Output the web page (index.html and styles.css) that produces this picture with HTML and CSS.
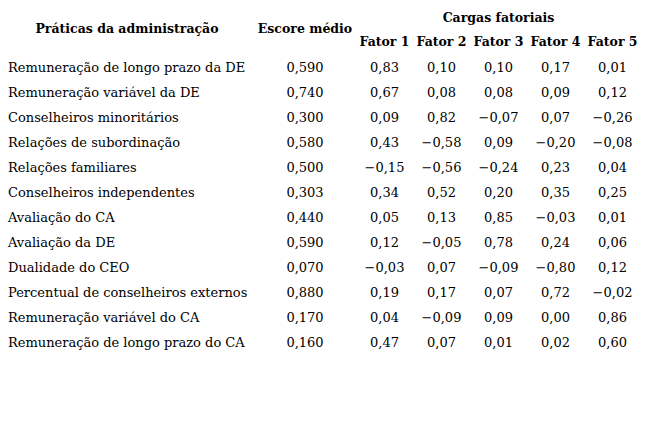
FILE: index.html
```html
<!DOCTYPE html>
<html lang="pt">
<head>
<meta charset="utf-8">
<title>Cargas fatoriais</title>
<link rel="stylesheet" href="styles.css">
</head>
<body>
<table class="tbl">
  <colgroup>
    <col class="c-label">
    <col class="c-score">
    <col class="c-f"><col class="c-f"><col class="c-f"><col class="c-f"><col class="c-f">
  </colgroup>
  <thead>
    <tr class="h1">
      <th rowspan="2" class="th-main">Práticas da administração</th>
      <th rowspan="2" class="th-main">Escore médio</th>
      <th colspan="5" class="th-group">Cargas fatoriais</th>
    </tr>
    <tr class="h2">
      <th>Fator 1</th><th>Fator 2</th><th>Fator 3</th><th>Fator 4</th><th>Fator 5</th>
    </tr>
  </thead>
  <tbody>
    <tr><td>Remuneração de longo prazo da DE</td><td>0,590</td><td>0,83</td><td>0,10</td><td>0,10</td><td>0,17</td><td>0,01</td></tr>
    <tr><td>Remuneração variável da DE</td><td>0,740</td><td>0,67</td><td>0,08</td><td>0,08</td><td>0,09</td><td>0,12</td></tr>
    <tr><td>Conselheiros minoritários</td><td>0,300</td><td>0,09</td><td>0,82</td><td>−0,07</td><td>0,07</td><td>−0,26</td></tr>
    <tr><td>Relações de subordinação</td><td>0,580</td><td>0,43</td><td>−0,58</td><td>0,09</td><td>−0,20</td><td>−0,08</td></tr>
    <tr><td>Relações familiares</td><td>0,500</td><td>−0,15</td><td>−0,56</td><td>−0,24</td><td>0,23</td><td>0,04</td></tr>
    <tr><td>Conselheiros independentes</td><td>0,303</td><td>0,34</td><td>0,52</td><td>0,20</td><td>0,35</td><td>0,25</td></tr>
    <tr><td>Avaliação do CA</td><td>0,440</td><td>0,05</td><td>0,13</td><td>0,85</td><td>−0,03</td><td>0,01</td></tr>
    <tr><td>Avaliação da DE</td><td>0,590</td><td>0,12</td><td>−0,05</td><td>0,78</td><td>0,24</td><td>0,06</td></tr>
    <tr><td>Dualidade do CEO</td><td>0,070</td><td>−0,03</td><td>0,07</td><td>−0,09</td><td>−0,80</td><td>0,12</td></tr>
    <tr><td>Percentual de conselheiros externos</td><td>0,880</td><td>0,19</td><td>0,17</td><td>0,07</td><td>0,72</td><td>−0,02</td></tr>
    <tr><td>Remuneração variável do CA</td><td>0,170</td><td>0,04</td><td>−0,09</td><td>0,09</td><td>0,00</td><td>0,86</td></tr>
    <tr><td>Remuneração de longo prazo do CA</td><td>0,160</td><td>0,47</td><td>0,07</td><td>0,01</td><td>0,02</td><td>0,60</td></tr>
  </tbody>
</table>
</body>
</html>
```
FILE: styles.css
```css
html, body {
  margin: 0;
  padding: 0;
  background: #ffffff;
}
body {
  color: #000;
  font-family: "DejaVu Serif", "Liberation Serif", serif;
  font-size: 13px;
}
.tbl {
  border-collapse: collapse;
  table-layout: fixed;
  width: 641px;
}
.c-label { width: 254px; }
.c-score { width: 102px; }
.c-f { width: 57px; }
.tbl th, .tbl td {
  padding: 0;
  white-space: nowrap;
  text-align: center;
}
.tbl th {
  font-weight: bold;
  font-size: 12.5px;
}
.h1 { height: 28px; }
.h2 { height: 27px; }
.tbl .th-main { vertical-align: top; padding-top: 21px; }
.tbl .th-group { vertical-align: top; padding-top: 10px; }
.tbl .h2 th { vertical-align: top; padding-top: 6px; }
.tbl tbody tr { height: 25px; }
.tbl tbody td { vertical-align: middle; }
.tbl tbody td:first-child { text-align: left; padding-left: 8px; }
```
